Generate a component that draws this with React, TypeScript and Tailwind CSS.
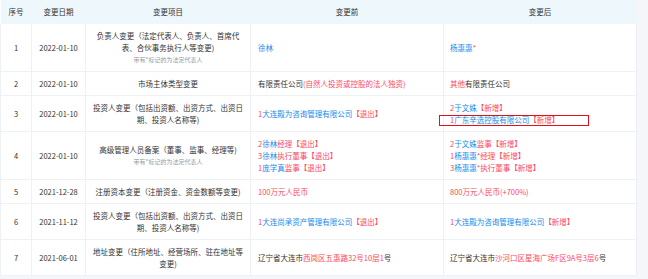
type Seg = [string, 'd' | 'b' | 'r'];

const tone: Record<string, string> = {
  d: 'text-[#333333]',
  b: 'text-[#128bed]',
  r: 'text-[#fd485e]',
};

type Row = {
  no: number;
  date: string;
  item: string;
  note?: boolean;
  before: Seg[][];
  after: Seg[][];
  mark?: boolean;
};

const rows: Row[] = [
  {
    no: 1,
    date: '2022-01-10',
    item: '负责人变更（法定代表人、负责人、首席代表、合伙事务执行人等变更)',
    note: true,
    before: [[['徐林', 'b']]],
    after: [[['杨惠惠', 'b'], ['*', 'r']]],
  },
  {
    no: 2,
    date: '2022-01-10',
    item: '市场主体类型变更',
    before: [[['有限责任公司', 'd'], ['(自然人投资或控股的法人独资)', 'r']]],
    after: [[['其他', 'r'], ['有限责任公司', 'd']]],
  },
  {
    no: 3,
    date: '2022-01-10',
    item: '投资人变更（包括出资额、出资方式、出资日期、投资人名称等)',
    before: [[['1', 'r'], ['大连殿为咨询管理有限公司', 'b'], ['【退出】', 'r']]],
    after: [
      [['2', 'r'], ['于文姝', 'b'], ['【新增】', 'r']],
      [['1', 'r'], ['广东辛选控股有限公司', 'b'], ['【新增】', 'r']],
    ],
    mark: true,
  },
  {
    no: 4,
    date: '2022-01-10',
    item: '高级管理人员备案（董事、监事、经理等)',
    note: true,
    before: [
      [['2', 'r'], ['徐林', 'b'], ['经理', 'r'], ['【退出】', 'r']],
      [['3', 'r'], ['徐林', 'b'], ['执行董事', 'r'], ['【退出】', 'r']],
      [['1', 'r'], ['庞学真', 'b'], ['监事', 'r'], ['【退出】', 'r']],
    ],
    after: [
      [['2', 'r'], ['于文姝', 'b'], ['监事', 'r'], ['【新增】', 'r']],
      [['1', 'r'], ['杨惠惠', 'b'], ['*经理', 'r'], ['【新增】', 'r']],
      [['3', 'r'], ['杨惠惠', 'b'], ['*执行董事', 'r'], ['【新增】', 'r']],
    ],
  },
  {
    no: 5,
    date: '2021-12-28',
    item: '注册资本变更（注册资金、资金数额等变更)',
    before: [[['100万元人民币', 'r']]],
    after: [[['800万元人民币(+700%)', 'r']]],
  },
  {
    no: 6,
    date: '2021-11-12',
    item: '投资人变更（包括出资额、出资方式、出资日期、投资人名称等)',
    before: [[['1', 'r'], ['大连尚承资产管理有限公司', 'b'], ['【退出】', 'r']]],
    after: [[['1', 'r'], ['大连殿为咨询管理有限公司', 'b'], ['【新增】', 'r']]],
  },
  {
    no: 7,
    date: '2021-06-01',
    item: '地址变更（住所地址、经营场所、驻在地址等变更)',
    before: [[['辽宁省大连市', 'd'], ['西岗区五惠路32号10层1', 'r'], ['号', 'd']]],
    after: [[['辽宁省大连市', 'd'], ['沙河口区星海广场F区9A号3层6', 'r'], ['号', 'd']]],
  },
];

function Lines({ lines }: { lines: Seg[][] }) {
  return (
    <>
      {lines.map((line, i) => (
        <div key={i} className="whitespace-nowrap">
          {line.map(([t, c], j) => (
            <span key={j} className={tone[c]}>
              {t}
            </span>
          ))}
        </div>
      ))}
    </>
  );
}

export default function App() {
  return (
    <div
      className="min-h-[279px] w-[648px] bg-[#f4f6f9] pr-[12px] pb-[5px]"
      style={{ fontFamily: '"Noto Sans CJK SC", "Noto Sans", sans-serif' }}
    >
      <table className="w-[636px] table-fixed border-collapse bg-white text-[7.5px] leading-[12px] text-[#333333]">
        <colgroup>
          <col className="w-[31px]" />
          <col className="w-[54px]" />
          <col className="w-[165px]" />
          <col className="w-[193px]" />
          <col className="w-[193px]" />
        </colgroup>
        <thead>
          <tr className="h-[24px] bg-[#eef7fc]">
            <th className="font-normal">序号</th>
            <th className="font-normal">变更日期</th>
            <th className="font-normal">变更项目</th>
            <th className="font-normal">变更前</th>
            <th className="font-normal">变更后</th>
          </tr>
        </thead>
        <tbody>
          {rows.map((r) => (
            <tr key={r.no} className="border-b border-[#edf1f6]">
              <td className="border-x border-[#edf1f6] text-center">{r.no}</td>
              <td className="border-x border-[#edf1f6] text-center">{r.date}</td>
              <td className="border-x border-[#edf1f6] px-[7px] pt-[6px] pb-[5px] text-center">
                <div>{r.item}</div>
                {r.note && (
                  <div className="text-[6px] leading-[12px] text-[#999999]">带有*标记的为法定代表人</div>
                )}
              </td>
              <td className="border-x border-[#edf1f6] px-[7px] pt-[6px] pb-[5px]">
                <Lines lines={r.before} />
              </td>
              <td className="relative border-x border-[#edf1f6] px-[6px] pt-[6px] pb-[5px]">
                <Lines lines={r.after} />
                {r.mark && (
                  <div className="absolute left-[-5px] top-[19px] h-[11px] w-[150px] border border-[#e0101c]" />
                )}
              </td>
            </tr>
          ))}
        </tbody>
      </table>
    </div>
  );
}
